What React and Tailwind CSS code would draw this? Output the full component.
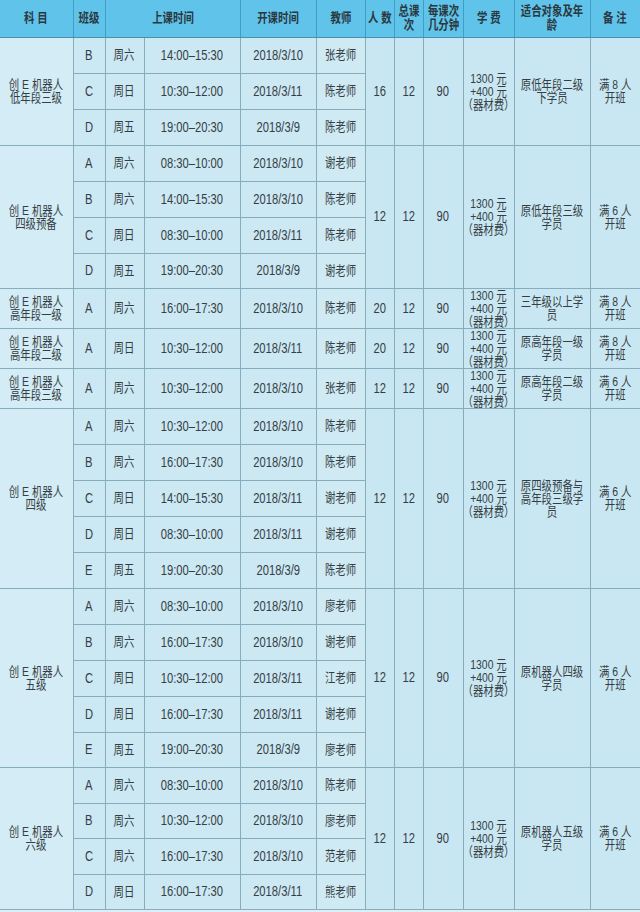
import React from "react";

const blocks = [
  {
    name: ["创 E 机器人", "低年段三级"],
    rows: [
      ["B", "周六", "14:00–15:30", "2018/3/10", "张老师"],
      ["C", "周日", "10:30–12:00", "2018/3/11", "陈老师"],
      ["D", "周五", "19:00–20:30", "2018/3/9", "陈老师"],
    ],
    h: [36, 36, 36],
    n: "16",
    target: ["原低年段二级", "下学员"],
    note: "满 8 人",
  },
  {
    name: ["创 E 机器人", "四级预备"],
    rows: [
      ["A", "周六", "08:30–10:00", "2018/3/10", "谢老师"],
      ["B", "周六", "14:00–15:30", "2018/3/10", "陈老师"],
      ["C", "周日", "08:30–10:00", "2018/3/11", "陈老师"],
      ["D", "周五", "19:00–20:30", "2018/3/9", "谢老师"],
    ],
    h: [36, 36, 36, 35],
    n: "12",
    target: ["原低年段三级", "学员"],
    note: "满 6 人",
  },
  {
    name: ["创 E 机器人", "高年段一级"],
    rows: [["A", "周六", "16:00–17:30", "2018/3/10", "陈老师"]],
    h: [40],
    n: "20",
    target: ["三年级以上学", "员"],
    note: "满 8 人",
  },
  {
    name: ["创 E 机器人", "高年段二级"],
    rows: [["A", "周日", "10:30–12:00", "2018/3/11", "陈老师"]],
    h: [40],
    n: "20",
    target: ["原高年段一级", "学员"],
    note: "满 8 人",
  },
  {
    name: ["创 E 机器人", "高年段三级"],
    rows: [["A", "周六", "10:30–12:00", "2018/3/10", "张老师"]],
    h: [40],
    n: "12",
    target: ["原高年段二级", "学员"],
    note: "满 6 人",
  },
  {
    name: ["创 E 机器人", "四级"],
    rows: [
      ["A", "周六", "10:30–12:00", "2018/3/10", "陈老师"],
      ["B", "周六", "16:00–17:30", "2018/3/10", "陈老师"],
      ["C", "周日", "14:00–15:30", "2018/3/11", "谢老师"],
      ["D", "周日", "08:30–10:00", "2018/3/11", "谢老师"],
      ["E", "周五", "19:00–20:30", "2018/3/9", "陈老师"],
    ],
    h: [36, 36, 36, 36, 36],
    n: "12",
    target: ["原四级预备与", "高年段三级学", "员"],
    note: "满 6 人",
  },
  {
    name: ["创 E 机器人", "五级"],
    rows: [
      ["A", "周六", "08:30–10:00", "2018/3/10", "廖老师"],
      ["B", "周六", "16:00–17:30", "2018/3/10", "谢老师"],
      ["C", "周日", "10:30–12:00", "2018/3/11", "江老师"],
      ["D", "周日", "16:00–17:30", "2018/3/11", "谢老师"],
      ["E", "周五", "19:00–20:30", "2018/3/9", "廖老师"],
    ],
    h: [36, 36, 36, 36, 35],
    n: "12",
    target: ["原机器人四级", "学员"],
    note: "满 6 人",
  },
  {
    name: ["创 E 机器人", "六级"],
    rows: [
      ["A", "周六", "08:30–10:00", "2018/3/10", "陈老师"],
      ["B", "周六", "10:30–12:00", "2018/3/10", "廖老师"],
      ["C", "周六", "16:00–17:30", "2018/3/10", "范老师"],
      ["D", "周日", "16:00–17:30", "2018/3/11", "熊老师"],
    ],
    h: [36, 35, 36, 35],
    n: "12",
    target: ["原机器人五级", "学员"],
    note: "满 6 人",
  },
];

const T = ({ lines, cls = "" }) => (
  <div className="flex justify-center">
    <span className={"block shrink-0 scale-x-80 whitespace-nowrap " + cls}>
      {lines.map((l, i) => (
        <span key={i} className="block">
          {l}
        </span>
      ))}
    </span>
  </div>
);

const cell = "border border-[#86adbc] text-center align-middle p-0 text-[#353e44]";
const hcell =
  "border border-[#3f9dc6] border-b-[#4a8fb0] border-t-0 text-center align-middle p-0 text-[#2a3840] font-bold text-[13px] leading-[14px] bg-[#60c3ea]";

export default function App() {
  const widths = [73, 32, 39, 96, 76, 49, 29, 29, 40, 51, 76, 50];
  return (
    <div className="w-[640px] h-[912px] overflow-hidden bg-[#dceff5] font-['Liberation_Sans','Noto_Sans_CJK_SC',sans-serif]">
      <table className="w-[640px] table-fixed border-collapse">
        <colgroup>
          {widths.map((w, i) => (
            <col key={i} style={{ width: w }} />
          ))}
        </colgroup>
        <thead>
          <tr className="h-[37px]">
            <th className={hcell + " border-l-0"}><T lines={["科 目"]} /></th>
            <th className={hcell}><T lines={["班级"]} /></th>
            <th className={hcell} colSpan={2}><T lines={["上课时间"]} /></th>
            <th className={hcell}><T lines={["开课时间"]} /></th>
            <th className={hcell}><T lines={["教师"]} /></th>
            <th className={hcell}><T lines={["人 数"]} /></th>
            <th className={hcell}><T lines={["总课", "次"]} /></th>
            <th className={hcell}><T lines={["每课次", "几分钟"]} /></th>
            <th className={hcell}><T lines={["学 费"]} /></th>
            <th className={hcell}><T lines={["适合对象及年", "龄"]} /></th>
            <th className={hcell + " border-r-0"}><T lines={["备 注"]} /></th>
          </tr>
        </thead>
        <tbody>
          {blocks.map((b, bi) =>
            b.rows.map((r, ri) => (
              <tr key={bi + "-" + ri} style={{ height: b.h[ri] }}>
                {ri === 0 && (
                  <td rowSpan={b.rows.length} className={cell + " border-l-0 bg-[#d3ecf5] text-[13px] leading-[13px]"}>
                    <T lines={b.name} />
                  </td>
                )}
                <td className={cell + " bg-[#cbe8f3] text-[14px]"}><T lines={[r[0]]} /></td>
                <td className={cell + " bg-[#cbe8f3] text-[13px]"}><T lines={[r[1]]} /></td>
                <td className={cell + " bg-[#cbe8f3] text-[14px]"}><T lines={[r[2]]} /></td>
                <td className={cell + " bg-[#cbe8f3] text-[14px]"}><T lines={[r[3]]} /></td>
                <td className={cell + " bg-[#d0eaf4] text-[13px]"}><T lines={[r[4]]} /></td>
                {ri === 0 && (
                  <>
                    <td rowSpan={b.rows.length} className={cell + " bg-[#c9e7f2] text-[14px]"}><T lines={[b.n]} /></td>
                    <td rowSpan={b.rows.length} className={cell + " bg-[#c9e7f2] text-[14px]"}><T lines={["12"]} /></td>
                    <td rowSpan={b.rows.length} className={cell + " bg-[#c9e7f2] text-[14px]"}><T lines={["90"]} /></td>
                    <td rowSpan={b.rows.length} className={cell + " bg-[#c9e7f2] text-[13px] leading-[13px]"}>
                      <T lines={["1300 元", "+400 元", "（器材费）"]} />
                    </td>
                    <td rowSpan={b.rows.length} className={cell + " bg-[#c9e7f2] text-[13px] leading-[13px]"}>
                      <T lines={b.target} />
                    </td>
                    <td rowSpan={b.rows.length} className={cell + " border-r-0 bg-[#c9e7f2] text-[13px] leading-[13px]"}>
                      <T lines={[b.note, "开班"]} />
                    </td>
                  </>
                )}
              </tr>
            ))
          )}
        </tbody>
      </table>
    </div>
  );
}
